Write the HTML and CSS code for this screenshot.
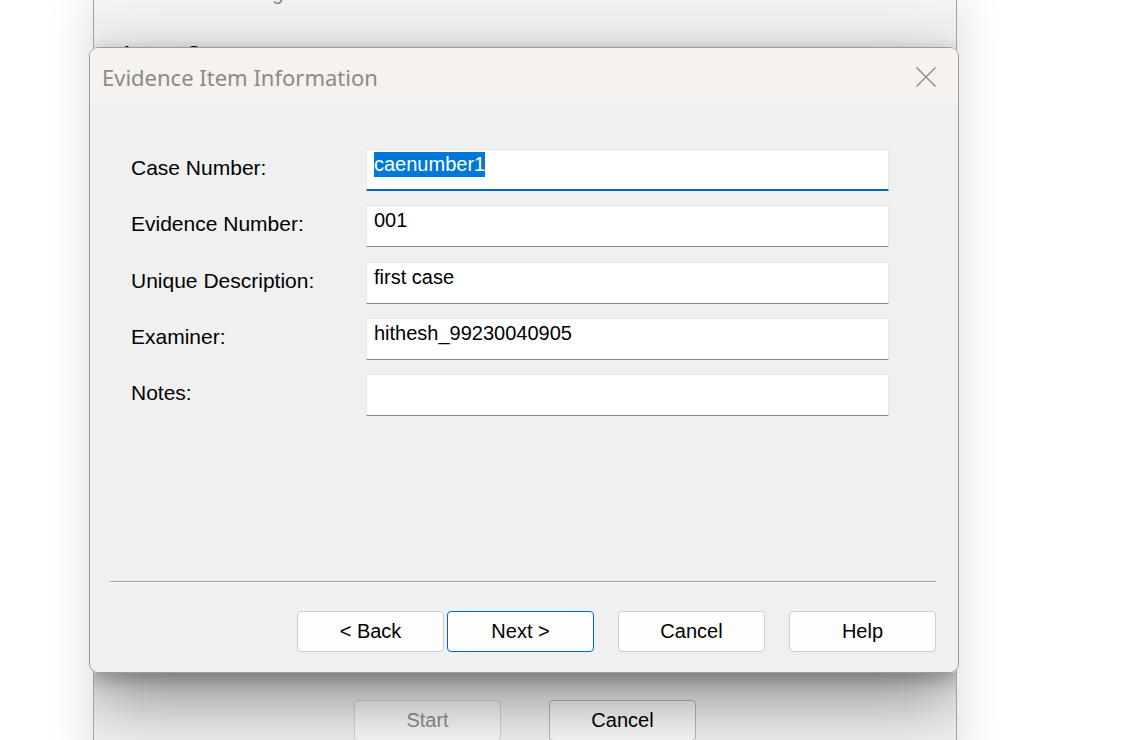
FILE: index.html
```html
<!DOCTYPE html>
<html>
<head>
<meta charset="utf-8">
<title>Evidence Item Information</title>
<link rel="stylesheet" href="styles.css">
</head>
<body>
<div class="desktop">
  <div class="window">
    <div class="win-top">Settings</div>
    <div class="win-heading">Image Source</div>
    <div class="win-spacer"></div>
    <div class="win-buttons">
      <button class="wbtn wbtn-disabled">Start</button>
      <button class="wbtn">Cancel</button>
    </div>
    <div class="modal-shade"></div>
  </div>

  <div class="dialog">
    <div class="titlebar">
      <span class="title">Evidence Item Information</span>
      <svg class="close" width="20" height="20" viewBox="0 0 20 20">
        <path d="M0.5 0.5 L19.5 19.5 M19.5 0.5 L0.5 19.5" stroke="#8a8a8a" stroke-width="1.4" fill="none"/>
      </svg>
    </div>
    <div class="body">
      <div class="form">
        <div class="label">Case Number:</div>
        <div class="input focused"><span class="sel">caenumber1</span></div>
        <div class="label">Evidence Number:</div>
        <div class="input">001</div>
        <div class="label">Unique Description:</div>
        <div class="input">first case</div>
        <div class="label">Examiner:</div>
        <div class="input">hithesh_99230040905</div>
        <div class="label">Notes:</div>
        <div class="input"></div>
      </div>
      <div class="spacer"></div>
      <div class="separator"></div>
      <div class="buttons">
        <button class="btn">&lt; Back</button>
        <button class="btn btn-default">Next &gt;</button>
        <button class="btn btn-gap">Cancel</button>
        <button class="btn btn-gap">Help</button>
      </div>
    </div>
  </div>
</div>
</body>
</html>
```

FILE: styles.css
```css
html, body {
  margin: 0;
  padding: 0;
  background: #ffffff;
  overflow: hidden;
}

.desktop {
  position: relative;
  width: 1124px;
  height: 740px;
  overflow: hidden;
  background: #ffffff;
  font-family: "Liberation Sans", Arial, sans-serif;
}

/* background wizard window */
.window {
  position: relative;
  margin-left: 93px;
  width: 864px;
  height: 760px;
  box-sizing: border-box;
  border-left: 1px solid #a3a3a3;
  border-right: 1px solid #a3a3a3;
  background: #f3f3f3;
  box-shadow: 0 0 44px rgba(0, 0, 0, 0.16);
  overflow: hidden;
  display: flex;
  flex-direction: column;
  padding: 0 0 0 30px;
}

.win-top {
  margin-top: -19px;
  margin-left: 97px;
  font-size: 20px;
  line-height: 24px;
  color: #8a8a8a;
}

.win-heading {
  margin-top: 36px;
  font-size: 20px;
  font-weight: bold;
  line-height: 24px;
  color: #000;
}

.win-spacer {
  flex: 1;
}

.win-buttons {
  display: flex;
  gap: 48px;
  margin-left: 230px;
  margin-bottom: 19px;
}

.wbtn {
  width: 147px;
  height: 41px;
  box-sizing: border-box;
  border: 1px solid #b9b9b9;
  border-radius: 4px;
  background: #fbfbfb;
  font-family: "Liberation Sans", Arial, sans-serif;
  font-size: 20px;
  color: #000;
  padding: 0;
}

.wbtn-disabled {
  color: #8e8e8e;
  border-color: #d6d6d6;
}

.modal-shade {
  position: absolute;
  left: -5px;
  top: 47px;
  width: 870px;
  height: 626px;
  border-radius: 8px;
  box-shadow: 0 26px 70px rgba(0, 0, 0, 0.44), 0 6px 18px rgba(0, 0, 0, 0.24);
}

/* dialog */
.dialog {
  position: absolute;
  left: 89px;
  top: 47px;
  width: 870px;
  height: 626px;
  box-sizing: border-box;
  border: 1px solid #9c9c9c;
  border-radius: 9px;
  background: #f0f0f0;
  overflow: hidden;
  display: flex;
  flex-direction: column;
}

.titlebar {
  height: 55px;
  flex: none;
  background: #f6f2ed;
  display: flex;
  align-items: center;
  justify-content: space-between;
  padding: 0 22px 0 12px;
}

.title {
  font-family: "Noto Sans", "Open Sans", sans-serif;
  font-size: 22px;
  color: #8a8a8a;
  margin-top: 2px;
}

.close {
  display: block;
  margin-top: 2px;
}

.body {
  flex: 1;
  display: flex;
  flex-direction: column;
  padding: 0 22px 20px 20px;
}

.form {
  margin-top: 46px;
  margin-left: 21px;
  display: grid;
  grid-template-columns: 235px 523px;
  grid-auto-rows: 42px;
  row-gap: 14.25px;
}

.label {
  font-size: 21px;
  line-height: 38px;
  color: #000;
}

.input {
  box-sizing: border-box;
  background: #ffffff;
  border: 1px solid #e6e6e6;
  border-bottom: 1px solid #8a8a8a;
  padding: 2px 8px 0 7px;
  font-size: 20px;
  line-height: 25px;
  color: #000;
}

.input.focused {
  border-bottom: 2px solid #0067c0;
}

.sel {
  display: inline-block;
  background: #0078d7;
  color: #ffffff;
}

.spacer {
  flex: 1;
}

.separator {
  height: 0;
  border-top: 1px solid #a0a0a0;
  border-bottom: 1px solid #ffffff;
}

.buttons {
  margin-top: 28px;
  display: flex;
  justify-content: flex-end;
  gap: 3px;
}

.btn {
  width: 147px;
  height: 41px;
  box-sizing: border-box;
  border: 1px solid #cfcfcf;
  border-radius: 4px;
  background: #fdfdfd;
  font-family: "Liberation Sans", Arial, sans-serif;
  font-size: 20px;
  color: #000;
  padding: 0;
}

.btn-default {
  border-color: #0067c0;
}

.btn-gap {
  margin-left: 21px;
}
```
